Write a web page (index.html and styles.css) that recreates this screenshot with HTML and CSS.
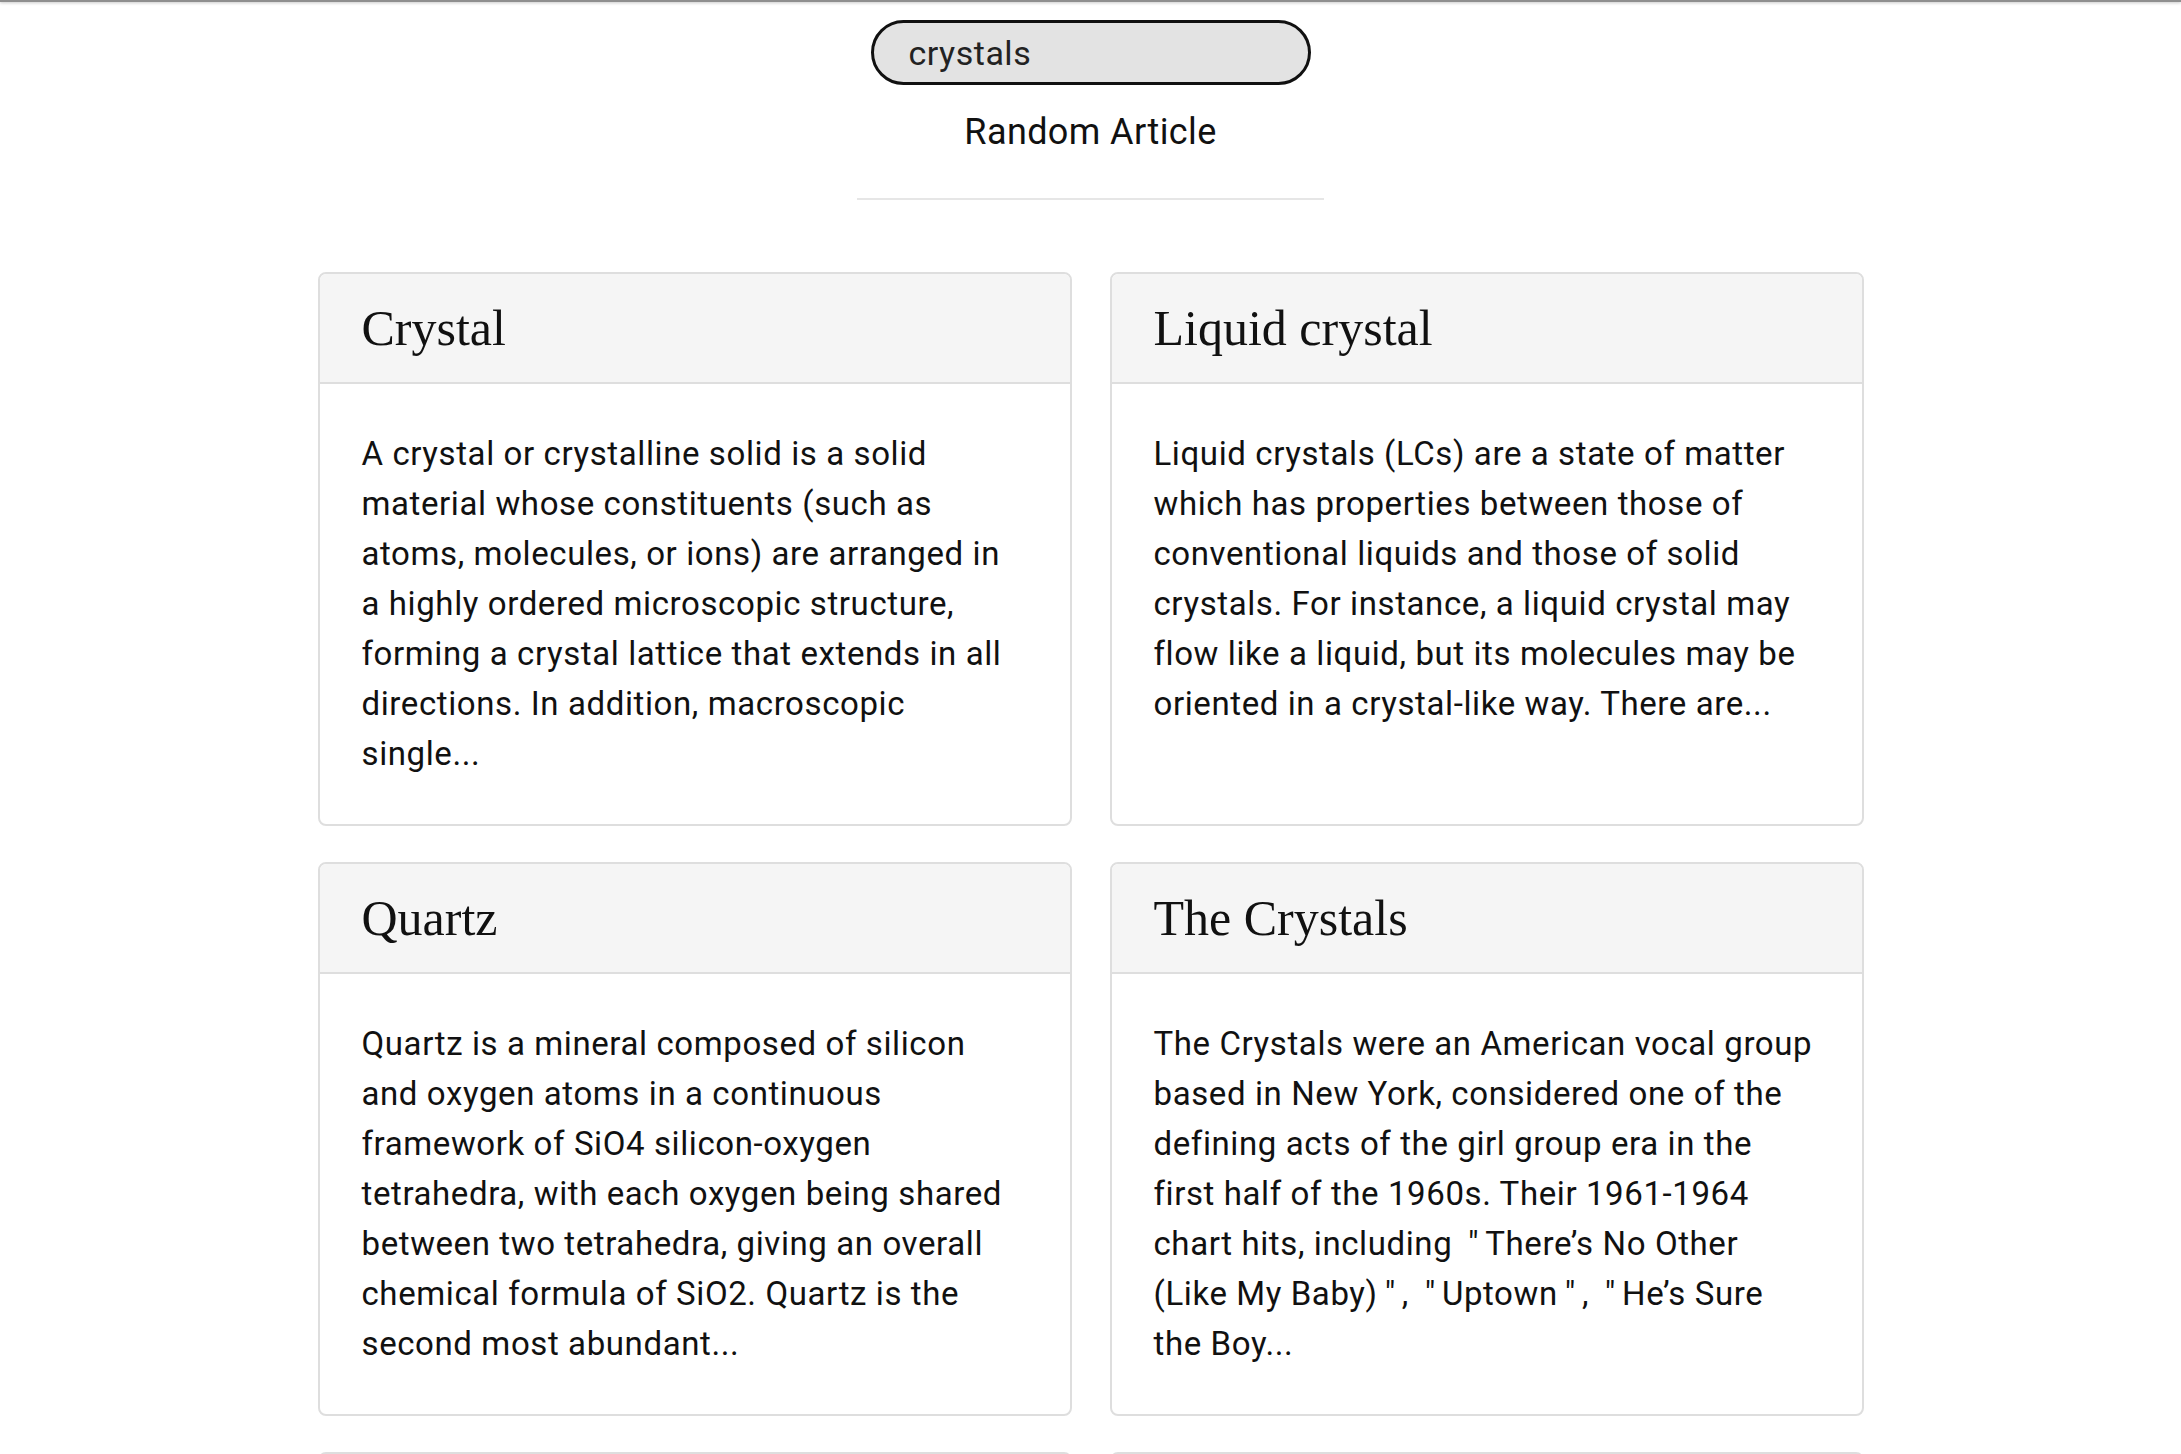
FILE: index.html
```html
<!DOCTYPE html>
<html lang="en">
<head>
<meta charset="utf-8">
<title>Search</title>
<link rel="stylesheet" href="styles.css">
</head>
<body>
<div class="topbar"></div>
<header class="head">
  <input class="search" type="text" value="crystals">
  <a class="random" href="#">Random Article</a>
  <hr class="divider">
</header>
<main class="results">
  <article class="card">
    <h2 class="card-title">Crystal</h2>
    <p class="card-body">A crystal or crystalline solid is a solid material whose constituents (such as atoms, molecules, or ions) are arranged in a highly ordered microscopic structure, forming a crystal lattice that extends in all directions. In addition, macroscopic single...</p>
  </article>
  <article class="card">
    <h2 class="card-title">Liquid crystal</h2>
    <p class="card-body">Liquid crystals (LCs) are a state of matter which has properties between those of conventional liquids and those of solid crystals. For instance, a liquid crystal may flow like a liquid, but its molecules may be oriented in a crystal-like way. There are...</p>
  </article>
  <article class="card">
    <h2 class="card-title">Quartz</h2>
    <p class="card-body">Quartz is a mineral composed of silicon and oxygen atoms in a continuous framework of SiO4 silicon-oxygen tetrahedra, with each oxygen being shared between two tetrahedra, giving an overall chemical formula of SiO2. Quartz is the second most abundant...</p>
  </article>
  <article class="card">
    <h2 class="card-title">The Crystals</h2>
    <p class="card-body">The Crystals were an American vocal group based in New York, considered one of the defining acts of the girl group era in the first half of the 1960s. Their 1961-1964 chart hits, including <span class="q">″</span>There’s No Other (Like My Baby)<span class="q">″</span>, <span class="q">″</span>Uptown<span class="q">″</span>, <span class="q">″</span>He’s Sure the Boy...</p>
  </article>
  <article class="card">
    <h2 class="card-title">Crystal structure</h2>
    <p class="card-body">In crystallography, crystal structure is a description of the ordered arrangement of atoms, ions or molecules in a crystalline material.</p>
  </article>
  <article class="card">
    <h2 class="card-title">Crystal system</h2>
    <p class="card-body">In crystallography, the terms crystal system, crystal family, and lattice system each refer to one of several classes of space groups, lattices, point groups, or crystals.</p>
  </article>
</main>
</body>
</html>
```

FILE: styles.css
```css
html, body {
  margin: 0;
  padding: 0;
  background: #ffffff;
}

body {
  font-family: Roboto, "Liberation Sans", sans-serif;
  color: #111111;
}

.topbar {
  height: 2px;
  background: #8f8f8f;
  box-shadow: 0 1px 3px rgba(0, 0, 0, 0.25);
}

.head {
  display: flex;
  flex-direction: column;
  align-items: center;
  padding-top: 18px;
}

.search {
  box-sizing: border-box;
  width: 440px;
  height: 65px;
  border: 3px solid #111111;
  border-radius: 33px;
  background: #e3e3e3;
  padding: 0 20px 0 35px;
  font-family: Roboto, "Liberation Sans", sans-serif;
  font-size: 34px;
  letter-spacing: 0.5px;
  color: #222222;
  outline: none;
}

.random {
  margin-top: 25px;
  font-size: 36px;
  line-height: 44px;
  letter-spacing: 0.4px;
  color: #111111;
  text-decoration: none;
}

.divider {
  width: 467px;
  height: 0;
  margin: 44px 0 0 0;
  border: 0;
  border-top: 2px solid #e6e6e6;
}

.results {
  display: grid;
  grid-template-columns: 754px 754px;
  column-gap: 38px;
  row-gap: 36px;
  justify-content: center;
  padding-top: 72px;
}

.card {
  border: 2px solid #dedede;
  border-radius: 8px;
  overflow: hidden;
  background: #ffffff;
}

.card-title {
  margin: 0;
  padding: 24px 42px 24px 42px;
  background: #f5f5f5;
  border-bottom: 2px solid #dedede;
  font-family: "Liberation Serif", serif;
  font-weight: normal;
  font-size: 50px;
  line-height: 60px;
  color: #111111;
}

.card-body {
  margin: 0;
  padding: 45px 48px 45px 42px;
  font-size: 33px;
  line-height: 50px;
  letter-spacing: 0.6px;
  color: #111111;
}

.q {
  padding: 0 6px 0 7px;
}
```
